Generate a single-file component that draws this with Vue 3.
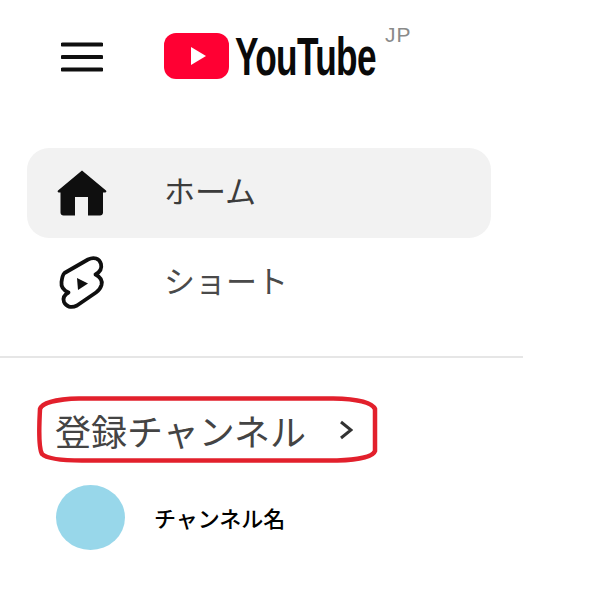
<template>
  <aside class="sidebar">
    <!-- ヘッダー -->
    <header class="top">
      <svg class="burger" viewBox="0 0 42 30" aria-hidden="true">
        <path d="M1.5 2.5h39M1.5 15h39M1.5 27.5h39" />
      </svg>
      <div class="logo">
        <svg class="logo-mark" viewBox="0 0 65 46" aria-hidden="true">
          <rect width="65" height="46" rx="12" fill="#ff0033" />
          <path d="M27 14 42 23 27 32z" fill="#fff" />
        </svg>
        <span class="logo-text">YouTube</span>
        <span class="logo-jp">JP</span>
      </div>
    </header>

    <nav class="menu">
      <a v-for="item in menu" :key="item.label" class="menu-item" :class="{ active: item.active }">
        <svg v-if="item.icon === 'home'" class="icon-home" viewBox="0 0 50 46" aria-hidden="true">
          <path
            d="M25 .5 49 20.500c.8.8.3 2-.8 2H46v20c0 1.900-1.300 3-3 3H31V27H18v18.500H6.500c-1.700 0-3-1.100-3-3v-20H1.800c-1.100 0-1.600-1.200-.8-2z"
            fill="#0f0f0f"
          />
        </svg>
        <svg v-else class="icon-shorts" viewBox="0 0 64 66" aria-hidden="true">
          <path
            d="M14.500 23 38 9.500C44 6.500 49.500 8.500 51 14 52 18 50 22 45.500 24.500 50.500 27 52.500 31 51.500 35 50.500 38.500 49 40.500 46 42.500L27 55.500C21 58.500 16 56.500 14 52 12.500 48 14 45 18.500 42.500 13 40 11 36 11.500 32 12 28 12.500 25 14.500 23Z"
            fill="none"
            stroke="#0f0f0f"
            stroke-width="3.800"
            stroke-linejoin="round"
          />
          <path d="M27 28 38 33.500 28 40z" fill="#0f0f0f" />
        </svg>
        <span class="menu-label">{{ item.label }}</span>
      </a>
    </nav>

    <div class="subs">
      <div class="subs-head">
        <span class="subs-title">登録チャンネル</span>
        <svg class="chevron" viewBox="0 0 14 20" aria-hidden="true">
          <path d="M2 2l10 8-10 8" />
        </svg>
        <!-- 手書きの赤枠 -->
        <svg class="annotation" viewBox="0 0 341 65" aria-hidden="true">
          <path
            d="M3 12C5 6 20 2 42 1.500H296C320 2 335 5 338 12V54C336 60 320 63 300 63.500H45C25 63.500 10 62 5 57 2 52 2 30 3 12Z"
          />
        </svg>
      </div>
      <div class="channel">
        <span class="avatar"></span>
        <span class="channel-name">チャンネル名</span>
      </div>
    </div>
  </aside>
</template>

<script setup>
const menu = [
  { label: 'ホーム', icon: 'home', active: true },
  { label: 'ショート', icon: 'shorts', active: false }
]
</script>

<style>
html,
body {
  margin: 0;
  background: #fff;
}
</style>

<style scoped>
.sidebar {
  width: 600px;
  height: 612px;
  overflow: hidden;
  background: #fff;
  font-family: 'Noto Sans CJK JP', 'Noto Sans', sans-serif;
}

.top {
  display: flex;
  align-items: flex-start;
  height: 148px;
  padding-left: 61px;
  box-sizing: border-box;
}

.burger {
  width: 42px;
  height: 30px;
  margin-top: 42px;
}

.burger path {
  fill: none;
  stroke: #0f0f0f;
  stroke-width: 4;
  stroke-linecap: round;
}

.logo {
  display: flex;
  align-items: flex-start;
  margin-left: 61px;
  margin-top: 33px;
}

.logo-mark {
  width: 65px;
  height: 46px;
}

.logo-text {
  display: block;
  width: 140px;
  margin-left: 6px;
  margin-top: 1px;
  font-family: 'Liberation Sans', sans-serif;
  font-size: 53px;
  font-weight: 700;
  line-height: 46px;
  letter-spacing: -1px;
  color: #0a0a0a;
  transform: scaleX(0.665);
  transform-origin: left center;
  white-space: nowrap;
}

.logo-jp {
  margin-left: 10px;
  margin-top: -8px;
  font-family: 'Liberation Sans', sans-serif;
  font-size: 21px;
  line-height: 20px;
  letter-spacing: 1px;
  color: #8a8a8a;
}

.menu {
  width: 523px;
  height: 210px;
  padding-left: 27px;
  box-sizing: border-box;
  border-bottom: 2px solid #e6e6e6;
}

.menu-item {
  display: flex;
  align-items: center;
  width: 464px;
  height: 90px;
  border-radius: 22px;
  color: #4a4a4a;
}

.menu-item.active {
  background: #f2f2f2;
  color: #3c3c3c;
}

.icon-home {
  width: 50px;
  height: 46px;
  margin-left: 30px;
  margin-right: 58px;
}

.icon-shorts {
  width: 64px;
  height: 66px;
  margin-left: 23px;
  margin-right: 51px;
}

.menu-label {
  margin-left: -1px;
  margin-top: -6px;
  font-size: 31px;
  line-height: 40px;
}

.subs {
  padding-top: 39px;
  padding-left: 37px;
}

.subs-head {
  position: relative;
  display: flex;
  align-items: center;
  width: 341px;
  height: 65px;
  box-sizing: border-box;
  padding-left: 18px;
}

.annotation {
  position: absolute;
  left: 0;
  top: 0;
  width: 341px;
  height: 65px;
  overflow: visible;
}

.annotation path {
  fill: none;
  stroke: #e2202c;
  stroke-width: 4.500;
}

.subs-title {
  font-size: 36px;
  line-height: 44px;
  color: #444;
  white-space: nowrap;
}

.chevron {
  width: 14px;
  height: 20px;
  margin-left: 33px;
}

.chevron path {
  fill: none;
  stroke: #333;
  stroke-width: 3;
}

.channel {
  display: flex;
  align-items: center;
  margin-top: 23px;
  margin-left: 19px;
}

.avatar {
  width: 69px;
  height: 65px;
  border-radius: 50%;
  background: #98d7ea;
}

.channel-name {
  margin-left: 29px;
  margin-top: -2px;
  font-size: 22px;
  font-weight: 500;
  line-height: 30px;
  color: #000;
}
</style>
